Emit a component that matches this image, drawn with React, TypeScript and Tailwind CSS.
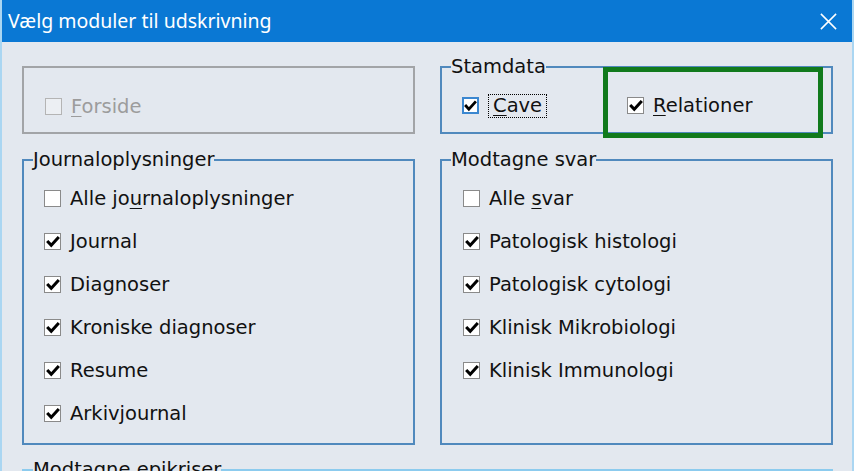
import React from 'react'

const font = { fontFamily: '"DejaVu Sans", Verdana, sans-serif' }

interface BoxProps {
  checked?: boolean
  disabled?: boolean
  focused?: boolean
}

const CheckBox: React.FC<BoxProps> = ({ checked, disabled, focused }) => {
  const border = focused
    ? 'border-2 border-[#3b87d0]'
    : disabled
      ? 'border border-[#b4b4b4]'
      : 'border border-[#8a8a8a]'
  return (
    <span
      className={`flex h-[17px] w-[17px] shrink-0 items-center justify-center ${border} ${disabled ? 'bg-[#eceff3]' : 'bg-white'}`}
    >
      {checked && (
        <svg viewBox="0 0 16 16" className="h-[14px] w-[14px]">
          <polyline
            points="2.5,8 6,11.8 13.5,3.5"
            fill="none"
            stroke="#000"
            strokeWidth="3.4"
            strokeLinecap="square"
          />
        </svg>
      )}
    </span>
  )
}

interface ItemProps extends BoxProps {
  label: React.ReactNode
  dotted?: boolean
}

const Item: React.FC<ItemProps> = ({ label, checked, disabled, focused, dotted }) => (
  <div className="flex h-[43px] items-center">
    <CheckBox checked={checked} disabled={disabled} focused={focused} />
    <span
      className={`ml-[9px] leading-[22px] ${disabled ? 'text-[#9c9c9c]' : 'text-[#111]'} ${dotted ? 'border border-dotted border-black px-[4px] -ml-[1px]' : ''}`}
    >
      {label}
    </span>
  </div>
)

const Group: React.FC<{ title: string; className?: string; children?: React.ReactNode }> = ({
  title,
  className,
  children,
}) => (
  <fieldset className={`m-0 min-w-0 border-2 border-[#5089bd] p-0 ${className ?? ''}`}>
    <legend className="ml-[9px] px-0 leading-[22px] text-[#111]">{title}</legend>
    {children}
  </fieldset>
)

export default function App() {
  return (
    <div
      className="flex h-[471px] w-[854px] flex-col overflow-hidden border-x-2 border-[#aad6f2] bg-[#e3e8ef] text-[19.5px]"
      style={font}
    >
      <div className="flex h-[42px] shrink-0 items-center justify-between bg-[#0a78d4] pl-[6px] pr-[14px]">
        <span
          className="text-[19.5px] text-white"
          style={{ fontFamily: '"Noto Sans", "Open Sans", sans-serif' }}
        >
          Vælg moduler til udskrivning
        </span>
        <svg viewBox="0 0 20 20" className="h-[19px] w-[19px]">
          <path d="M2 2 L18 18 M18 2 L2 18" stroke="#fff" strokeWidth="1.6" fill="none" />
        </svg>
      </div>

      <div className="grid grid-cols-[393px_393px] gap-x-[25px] pl-[20px] pt-[14px]">
        <div className="h-[68px] self-end border-2 border-[#a2a4a7] pl-[21px] pt-[17px]">
          <Item
            disabled
            label={
              <>
                <span className="underline underline-offset-[3px]">F</span>orside
              </>
            }
          />
        </div>

        <Group title="Stamdata" className="relative h-[78px] self-end">
          <div className="flex pl-[20px] pt-[6px]">
            <div className="w-[165px]">
              <Item
                checked
                focused
                dotted
                label={
                  <>
                    <span className="underline underline-offset-[3px]">C</span>ave
                  </>
                }
              />
            </div>
            <Item
              checked
              label={
                <>
                  <span className="underline underline-offset-[3px]">R</span>elationer
                </>
              }
            />
          </div>
          <div className="pointer-events-none absolute -top-[11px] left-[161px] h-[71px] w-[220px] border-[5px] border-[#117a1c]" />
        </Group>

        <Group title="Journaloplysninger" className="mt-[15px] h-[296px]">
          <div className="pl-[20px] pt-[6px]">
            <Item
              label={
                <>
                  Alle jo<span className="underline underline-offset-[3px]">u</span>rnaloplysninger
                </>
              }
            />
            <Item checked label="Journal" />
            <Item checked label="Diagnoser" />
            <Item checked label="Kroniske diagnoser" />
            <Item checked label="Resume" />
            <Item checked label="Arkivjournal" />
          </div>
        </Group>

        <Group title="Modtagne svar" className="mt-[15px] h-[296px]">
          <div className="pl-[21px] pt-[6px]">
            <Item
              label={
                <>
                  Alle <span className="underline underline-offset-[3px]">s</span>var
                </>
              }
            />
            <Item checked label="Patologisk histologi" />
            <Item checked label="Patologisk cytologi" />
            <Item checked label="Klinisk Mikrobiologi" />
            <Item checked label="Klinisk Immunologi" />
          </div>
        </Group>

        <fieldset className="col-span-2 m-0 mt-[14px] h-[80px] min-w-0 border-2 border-[#8ccbee] p-0">
          <legend className="ml-[9px] px-0 leading-[22px] text-[#111]">Modtagne epikriser</legend>
        </fieldset>
      </div>
    </div>
  )
}
